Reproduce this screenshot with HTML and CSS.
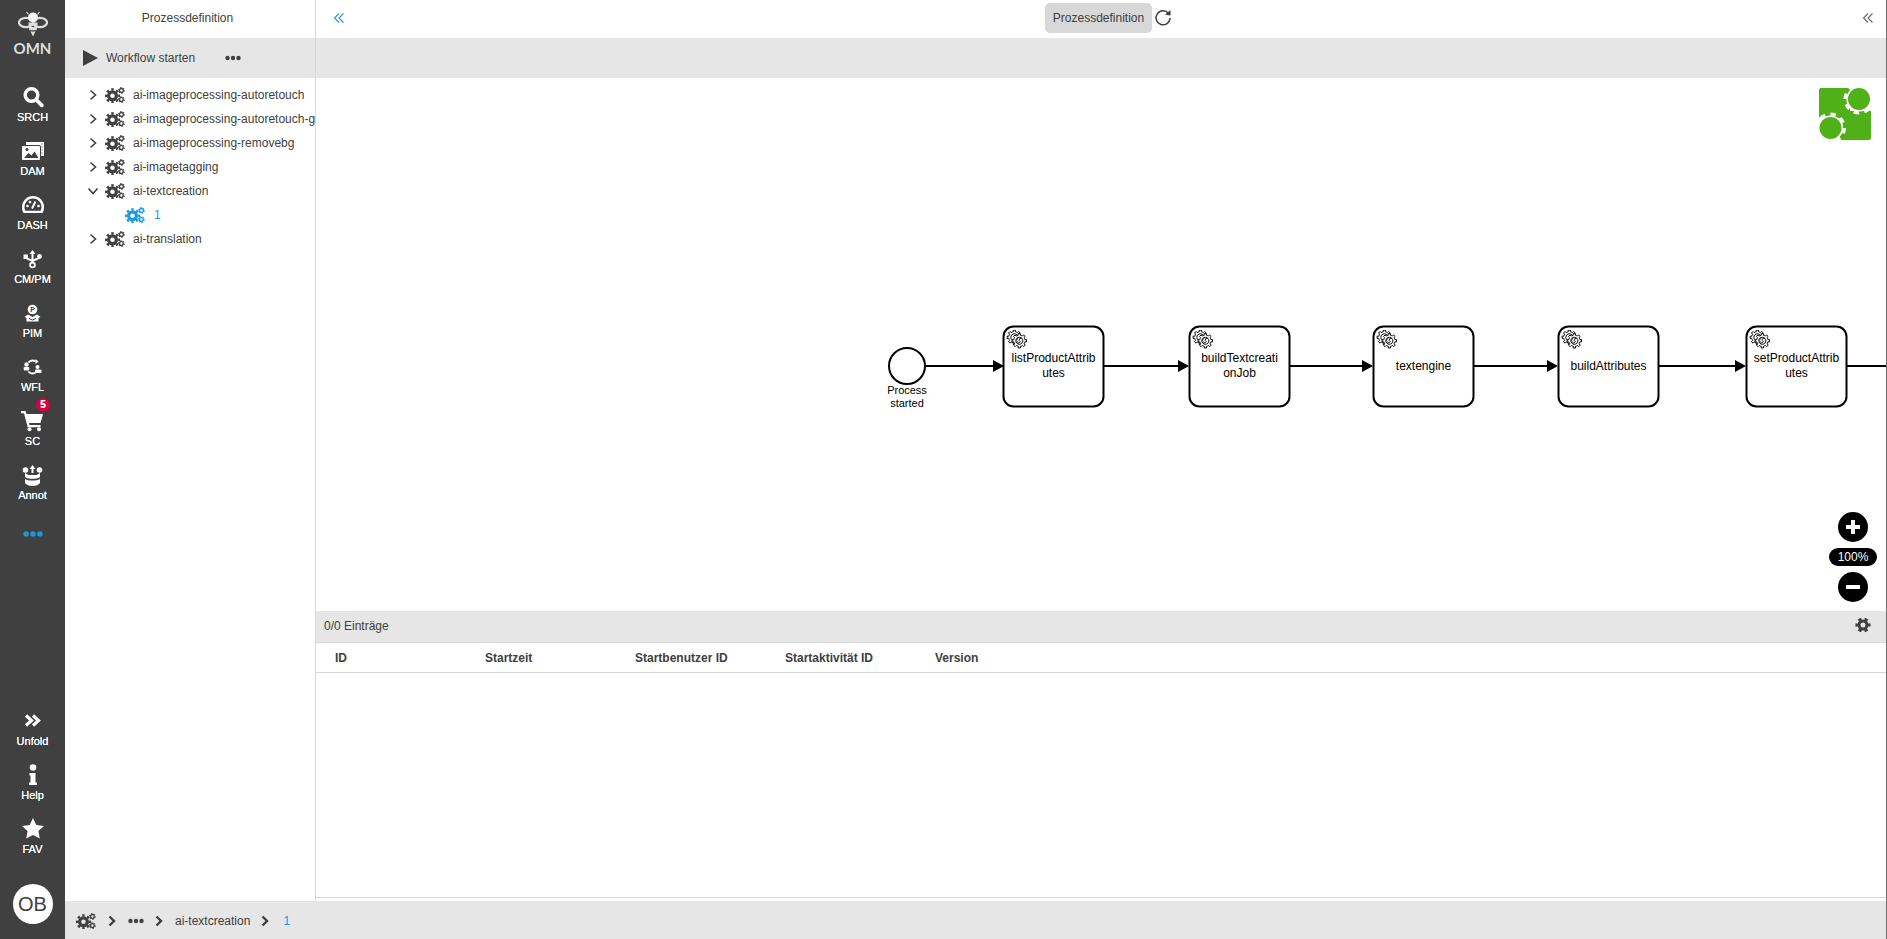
FILE: index.html
```html
<!DOCTYPE html>
<html lang="en">
<head>
    <meta charset="UTF-8">
    <meta name="viewport" content="width=device-width, initial-scale=1.0">
    <title>Prozessdefinition</title>
    <link rel="stylesheet" href="styles.css">
</head>
<body>
    <svg class="sprite" width="0" height="0">
        <symbol id="cogs" viewBox="0 0 20 16">
            <circle cx="7.5" cy="8.8" r="3.9" fill="none" stroke="currentColor" stroke-width="3.2"/>
            <circle cx="7.5" cy="8.8" r="6.4" fill="none" stroke="currentColor" stroke-width="2.4" pathLength="16" stroke-dasharray="1 1" stroke-dashoffset="0.5"/>
            <circle cx="16.4" cy="3.4" r="1.9" fill="none" stroke="currentColor" stroke-width="1.3"/>
            <circle cx="16.4" cy="3.4" r="3" fill="none" stroke="currentColor" stroke-width="1" pathLength="12" stroke-dasharray="1 1"/>
            <circle cx="16.4" cy="12.6" r="1.9" fill="none" stroke="currentColor" stroke-width="1.3"/>
            <circle cx="16.4" cy="12.6" r="3" fill="none" stroke="currentColor" stroke-width="1" pathLength="12" stroke-dasharray="1 1"/>
        </symbol>
        <symbol id="chev" viewBox="0 0 12 12">
            <path d="M3.5 1.5 8.5 6 3.5 10.5" fill="none" stroke="currentColor" stroke-width="1.6"/>
        </symbol>
        <symbol id="chev-bold" viewBox="0 0 12 12">
            <path d="M3.5 1.5 8 6 3.5 10.5" fill="none" stroke="currentColor" stroke-width="2.4"/>
        </symbol>
        <symbol id="dbl-left" viewBox="0 0 12 12">
            <path d="M6 1.5 1.5 6 6 10.5M10.5 1.5 6 6 10.5 10.5" fill="none" stroke="currentColor" stroke-width="1.1"/>
        </symbol>
        <symbol id="dots" viewBox="0 0 16 6">
            <circle cx="2.5" cy="3" r="2.2" fill="currentColor"/>
            <circle cx="8" cy="3" r="2.2" fill="currentColor"/>
            <circle cx="13.5" cy="3" r="2.2" fill="currentColor"/>
        </symbol>
        <symbol id="task-gear" viewBox="0 0 21 19">
            <g fill="#fff" stroke="#000" stroke-width="1">
                <path id="gear-shape" transform="translate(-2.5 -3.5)" d="m 12,18 v -1.71335 c 0.352326,-0.0705 0.703932,-0.17838 1.047628,-0.32133 0.344416,-0.14465 0.665822,-0.32133 0.966377,-0.52145 l 1.19431,1.18005 1.567487,-1.57688 -1.195028,-1.18014 c 0.403376,-0.61394 0.683079,-1.29908 0.825447,-2.01824 l 1.622133,-0.01 v -2.2196 l -1.636514,0.01 c -0.07333,-0.35153 -0.178319,-0.70024 -0.323564,-1.04372 -0.145244,-0.34406 -0.321407,-0.6644 -0.522735,-0.96217 l 1.131035,-1.13631 -1.583305,-1.56293 -1.129598,1.13589 c -0.614052,-0.40108 -1.302883,-0.68093 -2.022633,-0.82247 l 0.0093,-1.61852 h -2.241173 l 0.0042,1.63124 c -0.353763,0.0736 -0.705369,0.17977 -1.049785,0.32371 -0.344415,0.14437 -0.665102,0.32092 -0.9635006,0.52046 l -1.1698628,-1.15823 -1.5667691,1.5792 1.1684265,1.15669 c -0.4026573,0.61283 -0.68308,1.29797 -0.8247287,2.01713 l -1.6588041,0.003 v 2.22174 l 1.6724648,-0.006 c 0.073327,0.35077 0.1797598,0.70243 0.3242851,1.04472 0.1452428,0.34448 0.3214064,0.6644 0.5227339,0.96066 l -1.1993431,1.19723 1.5840256,1.56011 1.1964668,-1.19348 c 0.6140517,0.40346 1.3028827,0.68232 2.0233517,0.82331 l 7.19e-4,1.69892 h 2.226848 z m 0.221462,-3.9957 c -1.788948,0.7502 -3.8576,-0.0928 -4.6097055,-1.87438 -0.7521065,-1.78321 0.090598,-3.84627 1.8802645,-4.59604 1.78823,-0.74936 3.856881,0.0929 4.608987,1.87437 0.752106,1.78165 -0.0906,3.84612 -1.879546,4.59605 z"/>
                <use href="#gear-shape" x="5" y="3.5"/>
            </g>
        </symbol>
    </svg>

    <div class="app">
        <!-- main navigation -->
        <nav class="sidebar">
            <div class="brand">
                <svg class="bee" viewBox="0 0 30 26">
                    <ellipse cx="8" cy="10.500" rx="7" ry="4.600" fill="none" stroke="#ddd" stroke-width="2.200"/>
                    <ellipse cx="22" cy="10.500" rx="7" ry="4.600" fill="none" stroke="#ddd" stroke-width="2.200"/>
                    <circle cx="15" cy="5.500" r="5" fill="#f2f2f2"/>
                    <path d="M10.500 2.500 8.500 0M19.500 2.500 21.500 0" stroke="#ddd" stroke-width="1.200"/>
                    <path d="M10.500 10.500h9v3.200h-9zM10.800 15h8.400l-.6 3.200h-7.200zM12.500 19.500h5l-2.500 5z" fill="#ddd"/>
                </svg>
                <span class="brand-name">OMN</span>
            </div>
            <a class="nav-item">
                <svg class="nav-icon" viewBox="0 0 24 24"><circle cx="10.500" cy="11" r="6.300" fill="none" stroke="#fff" stroke-width="3.400"/><path d="M15.500 16 20.800 21.300" stroke="#fff" stroke-width="3.800" stroke-linecap="round"/></svg>
                <span>SRCH</span>
            </a>
            <a class="nav-item">
                <svg class="nav-icon" viewBox="0 0 24 24"><path d="M5 4h18v14h-3V9a2 2 0 0 0-2-2H5z" fill="#fff"/><path d="M20.500 6h1M20.500 9h1M20.500 12h1M20.500 15h1" stroke="#404040"/><rect x="1" y="8" width="18" height="14" rx="1" fill="#fff"/><path d="M3 20l4.500-5 3 2.500 3-4 4 6.500z" fill="#404040"/><circle cx="6" cy="11.500" r="1.500" fill="#404040"/></svg>
                <span>DAM</span>
            </a>
            <a class="nav-item">
                <svg class="nav-icon" viewBox="0 0 24 24"><path d="M12 4A11 11 0 0 0 1 15c0 2.500.6 4.500 1.600 6h18.800c1-1.500 1.600-3.500 1.600-6A11 11 0 0 0 12 4z" fill="#fff"/><path d="M12 6.500a8.500 8.500 0 0 0-8.500 8.500c0 1.500.3 2.800.9 3.800h15.200c.6-1 .9-2.300.9-3.800A8.500 8.500 0 0 0 12 6.500z" fill="#404040"/><circle cx="6.500" cy="14" r="1.300" fill="#fff"/><circle cx="9" cy="10" r="1.300" fill="#fff"/><circle cx="17.500" cy="14" r="1.300" fill="#fff"/><path d="M11 16.500 14.500 9.500" stroke="#fff" stroke-width="2"/></svg>
                <span>DASH</span>
            </a>
            <a class="nav-item">
                <svg class="nav-icon" viewBox="0 0 24 24"><path d="M11.500 7v9M4.500 11c1 3 7 2 7 5M18.500 11c-1 3-7 2-7 5" fill="none" stroke="#fff" stroke-width="2"/><path d="M11.500 4 14.500 8h-6z" fill="#fff"/><rect x="2.500" y="8.500" width="4.500" height="4.500" fill="#fff"/><circle cx="18.500" cy="10.500" r="2.400" fill="#fff"/><circle cx="11.500" cy="19" r="2.400" fill="none" stroke="#fff" stroke-width="1.800"/></svg>
                <span>CM/PM</span>
            </a>
            <a class="nav-item">
                <svg class="nav-icon" viewBox="0 0 24 24"><circle cx="11.500" cy="9.500" r="4.800" fill="#fff"/><text x="11.500" y="12" class="pim-letter">P</text><path d="M3.500 17l3.500-2.500 4.500 2.500 4.500-2.500 3.500 2.500-2 1v3.500h-12V18z" fill="#fff"/><path d="M8 18.500l3.500 1.500 3.500-1.500" fill="none" stroke="#404040"/></svg>
                <span>PIM</span>
            </a>
            <a class="nav-item">
                <svg class="nav-icon" viewBox="0 0 24 24"><path d="M7.500 8.500C9 6.500 12 6 14.500 7.500M14.500 18.500C12 20 9 19.500 7.500 17.500" fill="none" stroke="#fff" stroke-width="2"/><path d="M14.500 5v5l3-2.500z" fill="#fff"/><circle cx="5.500" cy="10.500" r="2.200" fill="#fff"/><rect x="2.700" y="13" width="5.600" height="3.500" rx="1" fill="#fff"/><circle cx="16.500" cy="13" r="2" fill="#fff"/><rect x="14" y="15.500" width="6.500" height="3.500" rx="1" fill="#fff"/></svg>
                <span>WFL</span>
            </a>
            <a class="nav-item">
                <span class="badge">5</span>
                <svg class="nav-icon" viewBox="0 0 24 24"><path d="M0 3h4.500l1 3H22l-2.500 9H8l.5 2h11v2.200H6.700L3 5.200H0z" fill="#fff"/><circle cx="8.500" cy="21.300" r="2" fill="#fff"/><circle cx="18" cy="21.300" r="2" fill="#fff"/></svg>
                <span>SC</span>
            </a>
            <a class="nav-item">
                <svg class="nav-icon" viewBox="0 0 24 24"><circle cx="4.500" cy="8" r="2.800" fill="#fff"/><circle cx="18.500" cy="8" r="2.800" fill="#fff"/><path d="M11.500 3 14.500 7h-2v4h-2V7h-2z" fill="#fff"/><path d="M4 11l3.500 2h8l3.500-2v4c-2 1.500-4.500 1.800-7.500 1.800S6 16.500 4 15z" fill="#fff"/><path d="M4 17c2 1.200 4.500 1.600 7.500 1.600s5.500-.4 7.500-1.600v4c-1.500 2-4 3-7.500 3s-6-1-7.500-3z" fill="#fff"/></svg>
                <span>Annot</span>
            </a>
            <div class="nav-more"><svg class="more-dots"><use href="#dots"/></svg></div>

            <div class="nav-bottom">
                <a class="nav-item">
                    <svg class="nav-icon" viewBox="0 0 24 24"><path d="M5 7.500 10.500 12.500 5 17.500M12 7.500 17.500 12.500 12 17.500" fill="none" stroke="#fff" stroke-width="3.200"/></svg>
                    <span>Unfold</span>
                </a>
                <a class="nav-item">
                    <svg class="nav-icon" viewBox="0 0 24 24"><circle cx="12" cy="5.500" r="3.300" fill="#fff"/><path d="M8.500 11h6v9.500H16V23H8v-2.500h1.500v-7h-1z" fill="#fff"/></svg>
                    <span>Help</span>
                </a>
                <a class="nav-item">
                    <svg class="nav-icon" viewBox="0 0 24 24"><path d="M12 2l3.300 6.900 7.700 1-5.600 5.200 1.400 7.500L12 18.900l-6.800 3.700 1.400-7.500L1 9.900l7.700-1z" fill="#fff"/></svg>
                    <span>FAV</span>
                </a>
                <div class="avatar">OB</div>
            </div>
        </nav>

        <div class="content">
            <div class="workarea">
                <!-- process tree -->
                <aside class="tree-panel">
                    <div class="panel-title">Prozessdefinition</div>
                    <div class="tree-toolbar">
                        <svg class="play" viewBox="0 0 15 16"><path d="M0 0 15 8 0 16z"/></svg>
                        <span>Workflow starten</span>
                        <svg class="toolbar-dots"><use href="#dots"/></svg>
                    </div>
                    <ul class="tree">
                        <li class="tree-row"><svg class="tree-chev"><use href="#chev"/></svg><svg class="cog"><use href="#cogs"/></svg>ai-imageprocessing-autoretouch</li>
                        <li class="tree-row"><svg class="tree-chev"><use href="#chev"/></svg><svg class="cog"><use href="#cogs"/></svg>ai-imageprocessing-autoretouch-g</li>
                        <li class="tree-row"><svg class="tree-chev"><use href="#chev"/></svg><svg class="cog"><use href="#cogs"/></svg>ai-imageprocessing-removebg</li>
                        <li class="tree-row"><svg class="tree-chev"><use href="#chev"/></svg><svg class="cog"><use href="#cogs"/></svg>ai-imagetagging</li>
                        <li class="tree-row"><svg class="tree-chev open"><use href="#chev"/></svg><svg class="cog"><use href="#cogs"/></svg>ai-textcreation</li>
                        <li class="tree-row child"><svg class="cog"><use href="#cogs"/></svg>1</li>
                        <li class="tree-row"><svg class="tree-chev"><use href="#chev"/></svg><svg class="cog"><use href="#cogs"/></svg>ai-translation</li>
                    </ul>
                </aside>

                <main class="main">
                    <div class="topbar">
                        <svg class="collapse blue"><use href="#dbl-left"/></svg>
                        <div class="tab-group">
                            <span class="tab">Prozessdefinition</span>
                            <svg class="reload" viewBox="0 0 18 18"><path d="M14.500 4.500A7 7 0 1 0 16 9" fill="none" stroke="currentColor" stroke-width="1.500"/><path d="M11 5.800 16.500 6.500V1z" fill="currentColor"/></svg>
                        </div>
                        <svg class="collapse"><use href="#dbl-left"/></svg>
                    </div>
                    <div class="main-toolbar"></div>

                    <!-- bpmn diagram -->
                    <div class="canvas">
                        <svg class="diagram">
                            <g transform="translate(-316 -78)">
                                <circle class="shape" cx="907" cy="366" r="18"/>
                                <text class="event-label" x="907" y="394">Process</text>
                                <text class="event-label" x="907" y="407">started</text>

                                <path class="flow" d="M925 366H995M1104 366H1180M1289 366H1364M1474 366H1549M1658 366H1737M1846 366H1890"/>
                                <path d="M993 360 1004 366 993 372zM1178 360 1189 366 1178 372zM1362 360 1373 366 1362 372zM1547 360 1558 366 1547 372zM1735 360 1746 366 1735 372z"/>

                                <rect class="shape" x="1003.500" y="326.500" width="100" height="80" rx="10"/>
                                <use href="#task-gear" x="1006" y="330" width="21" height="19"/>
                                <text class="task-label" x="1053.500" y="362">listProductAttrib</text>
                                <text class="task-label" x="1053.500" y="377">utes</text>

                                <rect class="shape" x="1189.500" y="326.500" width="100" height="80" rx="10"/>
                                <use href="#task-gear" x="1192" y="330" width="21" height="19"/>
                                <text class="task-label" x="1239.500" y="362">buildTextcreati</text>
                                <text class="task-label" x="1239.500" y="377">onJob</text>

                                <rect class="shape" x="1373.500" y="326.500" width="100" height="80" rx="10"/>
                                <use href="#task-gear" x="1376" y="330" width="21" height="19"/>
                                <text class="task-label" x="1423.500" y="370">textengine</text>

                                <rect class="shape" x="1558.500" y="326.500" width="100" height="80" rx="10"/>
                                <use href="#task-gear" x="1561" y="330" width="21" height="19"/>
                                <text class="task-label" x="1608.500" y="370">buildAttributes</text>

                                <rect class="shape" x="1746.500" y="326.500" width="100" height="80" rx="10"/>
                                <use href="#task-gear" x="1749" y="330" width="21" height="19"/>
                                <text class="task-label" x="1796.500" y="362">setProductAttrib</text>
                                <text class="task-label" x="1796.500" y="377">utes</text>
                            </g>
                        </svg>

                        <svg class="puzzle" viewBox="0 0 52 52">
                            <path d="M2 0H31V30H2a2 2 0 0 1-2-2V2a2 2 0 0 1 2-2z" fill="#4fb018"/>
                            <path d="M21 22H52V50a2 2 0 0 1-2 2H21z" fill="#4fb018"/>
                            <path d="M31 0H52V23H31z" fill="#fff"/>
                            <path d="M0 31H21V52H0z" fill="#fff"/>
                            <circle cx="40" cy="11" r="12.600" fill="#fff"/>
                            <circle cx="40" cy="11" r="13.800" fill="none" stroke="#fff" stroke-width="3.200" pathLength="16" stroke-dasharray="1 1"/>
                            <circle cx="11.500" cy="40" r="12.600" fill="#fff"/>
                            <circle cx="11.500" cy="40" r="13.800" fill="none" stroke="#fff" stroke-width="3.200" pathLength="16" stroke-dasharray="1 1"/>
                            <circle cx="40" cy="11" r="11" fill="#4fb018"/>
                            <circle cx="11.500" cy="40" r="11" fill="#4fb018"/>
                        </svg>

                        <div class="zoom-controls">
                            <div class="zoom-btn"><svg viewBox="0 0 30 30"><path d="M15 8V22M8 15H22" stroke="#fff" stroke-width="4"/></svg></div>
                            <div class="zoom-value">100%</div>
                            <div class="zoom-btn"><svg viewBox="0 0 30 30"><path d="M8 15H22" stroke="#fff" stroke-width="4"/></svg></div>
                        </div>
                    </div>

                    <div class="stat-bar">
                        <span>0/0 Einträge</span>
                        <svg class="settings" viewBox="0 0 16 16">
                            <circle cx="8" cy="8" r="4" fill="none" stroke="currentColor" stroke-width="3"/>
                            <circle cx="8" cy="8" r="6.300" fill="none" stroke="currentColor" stroke-width="2.600" pathLength="12" stroke-dasharray="1 1" stroke-dashoffset="0.500"/>
                        </svg>
                    </div>
                    <div class="table-head">
                        <span class="col">ID</span>
                        <span class="col">Startzeit</span>
                        <span class="col">Startbenutzer ID</span>
                        <span class="col">Startaktivität ID</span>
                        <span class="col">Version</span>
                    </div>
                    <div class="table-body"></div>
                </main>
            </div>

            <footer class="crumbs">
                <svg class="cog"><use href="#cogs"/></svg>
                <svg class="crumb-sep"><use href="#chev-bold"/></svg>
                <svg class="crumb-dots"><use href="#dots"/></svg>
                <svg class="crumb-sep"><use href="#chev-bold"/></svg>
                <span>ai-textcreation</span>
                <svg class="crumb-sep"><use href="#chev-bold"/></svg>
                <span class="crumb-current">1</span>
            </footer>
        </div>
    </div>
</body>
</html>
```

FILE: styles.css
```css
* {
    box-sizing: border-box;
}

body {
    margin: 0;
    font-family: "Liberation Sans", Arial, sans-serif;
    font-size: 12px;
    color: #404040;
    background-color: #fff;
}

.sprite {
    position: absolute;
}

.app {
    display: flex;
    height: 939px;
    overflow: hidden;
}

/* sidebar */
.sidebar {
    width: 65px;
    flex-shrink: 0;
    display: flex;
    flex-direction: column;
    background-color: #404040;
    color: #fff;
}

.brand {
    height: 74px;
    padding-top: 12px;
    display: flex;
    flex-direction: column;
    align-items: center;
}

.bee {
    width: 30px;
    height: 26px;
}

.brand-name {
    margin-top: 4px;
    font-family: "Lato", sans-serif;
    font-size: 15px;
    font-weight: 700;
    line-height: 12px;
    color: #ddd;
}

.nav-item {
    position: relative;
    height: 54px;
    padding-top: 10px;
    display: flex;
    flex-direction: column;
    align-items: center;
    font-size: 11px;
    line-height: 13px;
    text-shadow: 0 0 0.3px #fff;
}

.nav-item span {
    margin-top: 3px;
}

.nav-icon {
    width: 24px;
    height: 24px;
}

.nav-item .badge {
    position: absolute;
    top: 0;
    left: 36px;
    width: 14px;
    height: 14px;
    margin: 0;
    border-radius: 50%;
    background-color: #d9003c;
    font-size: 10px;
    font-weight: bold;
    line-height: 14px;
    text-align: center;
}

.nav-more {
    height: 56px;
    display: flex;
    align-items: center;
    justify-content: center;
}

.more-dots {
    width: 20px;
    height: 8px;
    color: #1a9ad9;
}

.nav-bottom {
    margin-top: auto;
    padding-bottom: 15px;
    display: flex;
    flex-direction: column;
    align-items: center;
}

.nav-bottom .nav-item {
    width: 100%;
}

.avatar {
    width: 40px;
    height: 40px;
    margin-top: 24px;
    border-radius: 50%;
    background-color: #fff;
    color: #404040;
    font-size: 20px;
    line-height: 40px;
    text-align: center;
}

/* layout */
.content {
    flex: 1;
    min-width: 0;
    display: flex;
    flex-direction: column;
    border-right: 1px solid #707070;
}

.workarea {
    flex: 1;
    min-height: 0;
    display: flex;
}

/* tree panel */
.tree-panel {
    width: 251px;
    flex-shrink: 0;
    border-right: 1px solid #d8d8d8;
    overflow: hidden;
}

.panel-title {
    height: 38px;
    padding-right: 5px;
    line-height: 36px;
    text-align: center;
}

.tree-toolbar {
    height: 40px;
    padding-left: 18px;
    display: flex;
    align-items: center;
    background-color: #e6e6e6;
}

.play {
    width: 15px;
    height: 16px;
    margin-right: 8px;
    fill: #404040;
}

.toolbar-dots {
    width: 16px;
    height: 6px;
    margin-left: 30px;
}

.tree {
    margin: 5px 0 0;
    padding: 0;
    list-style: none;
}

.tree-row {
    height: 24px;
    padding-left: 22px;
    display: flex;
    align-items: center;
    white-space: nowrap;
}

.tree-row.child {
    padding-left: 60px;
    color: #1a9ad9;
}

.tree-chev {
    width: 12px;
    height: 12px;
    margin-right: 6px;
    flex-shrink: 0;
}

.tree-chev.open {
    transform: rotate(90deg);
}

.cog {
    width: 20px;
    height: 16px;
    margin-right: 8px;
    flex-shrink: 0;
}

.child .cog {
    margin-right: 9px;
}

/* main area */
.main {
    flex: 1;
    min-width: 0;
    display: flex;
    flex-direction: column;
}

.topbar {
    height: 38px;
    padding: 0 12px 2px 17px;
    display: flex;
    align-items: center;
    justify-content: space-between;
}

.collapse {
    width: 12px;
    height: 12px;
    color: #666;
}

.collapse.blue {
    color: #2f8fcf;
}

.tab-group {
    display: flex;
    align-items: center;
    margin-left: 10px;
}

.tab {
    height: 30px;
    padding: 0 8px;
    border-radius: 5px;
    background-color: #d8d8d8;
    line-height: 30px;
}

.reload {
    width: 18px;
    height: 18px;
    margin-left: 2px;
}

.main-toolbar {
    height: 40px;
    background-color: #e6e6e6;
}

.canvas {
    position: relative;
    flex: 1;
    min-height: 0;
}

.diagram {
    display: block;
    width: 100%;
    height: 100%;
}

.shape {
    fill: #fff;
    stroke: #000;
    stroke-width: 2;
}

.flow {
    fill: none;
    stroke: #000;
    stroke-width: 2;
}

.task-label,
.event-label {
    fill: #000;
    font-size: 12px;
    text-anchor: middle;
}

.event-label {
    font-size: 11px;
}

.pim-letter {
    fill: #404040;
    font-size: 7px;
    font-weight: bold;
    text-anchor: middle;
}

.puzzle {
    position: absolute;
    top: 10px;
    right: 15px;
    width: 52px;
    height: 52px;
}

.zoom-controls {
    position: absolute;
    top: 434px;
    right: 9px;
    width: 48px;
    display: flex;
    flex-direction: column;
    align-items: center;
}

.zoom-btn {
    width: 30px;
    height: 30px;
    border-radius: 50%;
    background-color: #000;
}

.zoom-btn svg {
    display: block;
}

.zoom-value {
    width: 48px;
    height: 18px;
    margin: 6px 0;
    border-radius: 9px;
    background-color: #000;
    color: #fff;
    line-height: 18px;
    text-align: center;
}

.stat-bar {
    height: 32px;
    flex-shrink: 0;
    padding: 0 15px 1px 8px;
    display: flex;
    align-items: center;
    justify-content: space-between;
    border-bottom: 1px solid #d8d8d8;
    background-color: #e6e6e6;
}

.settings {
    width: 16px;
    height: 16px;
    margin-bottom: 3px;
}

.table-head {
    height: 30px;
    flex-shrink: 0;
    padding-left: 19px;
    display: flex;
    align-items: center;
    border-bottom: 1px solid #d8d8d8;
    font-weight: bold;
}

.col {
    width: 150px;
}

.table-body {
    height: 225px;
    flex-shrink: 0;
    margin-bottom: 3px;
    border-bottom: 1px solid #d8d8d8;
}

/* breadcrumb footer */
.crumbs {
    height: 38px;
    flex-shrink: 0;
    padding: 1px 0 0 11px;
    display: flex;
    align-items: center;
    background-color: #e6e6e6;
}

.crumbs .cog {
    margin-right: 10px;
}

.crumb-sep {
    width: 12px;
    height: 12px;
    margin-right: 10px;
}

.crumb-dots {
    width: 16px;
    height: 6px;
    margin-right: 9px;
}

.crumbs span {
    margin-right: 9px;
}

.crumbs .crumb-current {
    margin-left: 2px;
    color: #1a9ad9;
}
```
